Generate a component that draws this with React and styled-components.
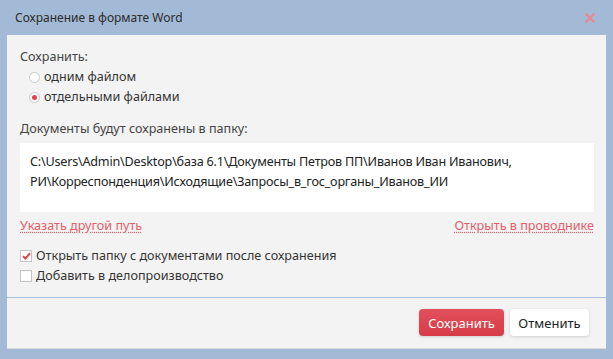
import styled, { createGlobalStyle } from "styled-components";

const Global = createGlobalStyle`
  html, body {
    margin: 0;
    padding: 0;
    background: #a2bad6;
  }
  body {
    font-family: "Noto Sans", "Open Sans", sans-serif;
    color: #333;
  }
`;

const Window = styled.div`
  width: 613px;
  height: 359px;
  display: flex;
  flex-direction: column;
  background: #a2bad6;
`;

const Header = styled.div`
  height: 35px;
  display: flex;
  align-items: center;
  justify-content: space-between;
  padding: 0 17px 0 15px;
  box-sizing: border-box;
`;

const Title = styled.div`
  font-size: 12px;
  color: #2b2b2b;
`;

const Close = styled.button`
  border: none;
  background: none;
  padding: 0;
  width: 12px;
  height: 12px;
  display: flex;
  cursor: pointer;
`;

const Panel = styled.div`
  margin: 0 7px;
  background: #f3f3f3;
  border-bottom: 1px solid #dcdcdc;
  display: flex;
  flex-direction: column;
`;

const Body = styled.div`
  padding: 12px 12px 11px 13px;
  display: flex;
  flex-direction: column;
  font-size: 12.6px;
  line-height: 20px;
`;

const Label = styled.div`
  color: #444;
  margin-top: ${(p) => p.$mt || 0}px;
`;

const Option = styled.label`
  display: flex;
  align-items: center;
  gap: 4px;
  height: 20px;
  padding-left: ${(p) => p.$indent || 0}px;
  color: #333;
`;

const Radio = styled.span`
  width: 11px;
  height: 11px;
  border-radius: 50%;
  border: 1px solid #c9c9c9;
  background: #fff;
  box-sizing: border-box;
  display: flex;
  align-items: center;
  justify-content: center;

  &::after {
    content: "";
    width: 5px;
    height: 5px;
    border-radius: 50%;
    background: ${(p) => (p.$on ? "#e2414c" : "transparent")};
  }
`;

const Check = styled.span`
  width: 12px;
  height: 12px;
  border: 1px solid #c4c4c4;
  background: #fff;
  box-sizing: border-box;
  display: flex;
  align-items: center;
  justify-content: center;
`;

const PathBox = styled.div`
  margin-top: 4px;
  height: 69px;
  box-sizing: border-box;
  background: #fff;
  padding: 9px 10px;
  line-height: 20px;
  letter-spacing: -0.2px;
  color: #222;
`;

const Links = styled.div`
  margin-top: 4px;
  display: flex;
  justify-content: space-between;
`;

const LinkText = styled.a`
  color: #e0606a;
  text-decoration: underline;
  text-decoration-style: dotted;
  text-underline-offset: 2px;
  cursor: pointer;
`;

const Checks = styled.div`
  margin-top: 10px;
  display: flex;
  flex-direction: column;
`;

const Footer = styled.div`
  border-top: 1px solid #a9c1dc;
  padding: 11px 17px 12px 0;
  display: flex;
  justify-content: flex-end;
  gap: 6px;
`;

const Button = styled.button`
  height: 27px;
  width: ${(p) => (p.$primary ? 85 : 79)}px;
  padding: 0;
  border: none;
  border-radius: 4px;
  font-family: inherit;
  font-size: 13px;
  cursor: pointer;
  background: ${(p) => (p.$primary ? "linear-gradient(#e2505b, #d63c47)" : "#fff")};
  color: ${(p) => (p.$primary ? "#fff" : "#222")};
  box-shadow: 0 1px 3px rgba(0, 0, 0, 0.15);
`;

const CheckMark = () => (
  <svg width="9" height="8" viewBox="0 0 9 8">
    <path d="M1 4.2 L3.4 6.5 L8 1.2" fill="none" stroke="#e0414c" strokeWidth="1.9" />
  </svg>
);

export default function App() {
  return (
    <>
      <Global />
      <Window>
        <Header>
          <Title>Сохранение в формате Word</Title>
          <Close aria-label="close">
            <svg width="12" height="12" viewBox="0 0 12 12">
              <path d="M1.5 1.5 L10.5 10.5 M10.5 1.5 L1.5 10.5" stroke="#e88a93" strokeWidth="2.4" />
            </svg>
          </Close>
        </Header>
        <Panel>
          <Body>
            <Label>Сохранить:</Label>
            <Option $indent={9}>
              <Radio />
              одним файлом
            </Option>
            <Option $indent={9}>
              <Radio $on />
              отдельными файлами
            </Option>
            <Label $mt={12}>Документы будут сохранены в папку:</Label>
            <PathBox>
              C:\Users\Admin\Desktop\база 6.1\Документы Петров ПП\Иванов Иван Иванович,
              РИ\Корреспонденция\Исходящие\Запросы_в_гос_органы_Иванов_ИИ
            </PathBox>
            <Links>
              <LinkText>Указать другой путь</LinkText>
              <LinkText>Открыть в проводнике</LinkText>
            </Links>
            <Checks>
              <Option>
                <Check>
                  <CheckMark />
                </Check>
                Открыть папку с документами после сохранения
              </Option>
              <Option>
                <Check />
                Добавить в делопроизводство
              </Option>
            </Checks>
          </Body>
          <Footer>
            <Button $primary>Сохранить</Button>
            <Button>Отменить</Button>
          </Footer>
        </Panel>
      </Window>
    </>
  );
}
